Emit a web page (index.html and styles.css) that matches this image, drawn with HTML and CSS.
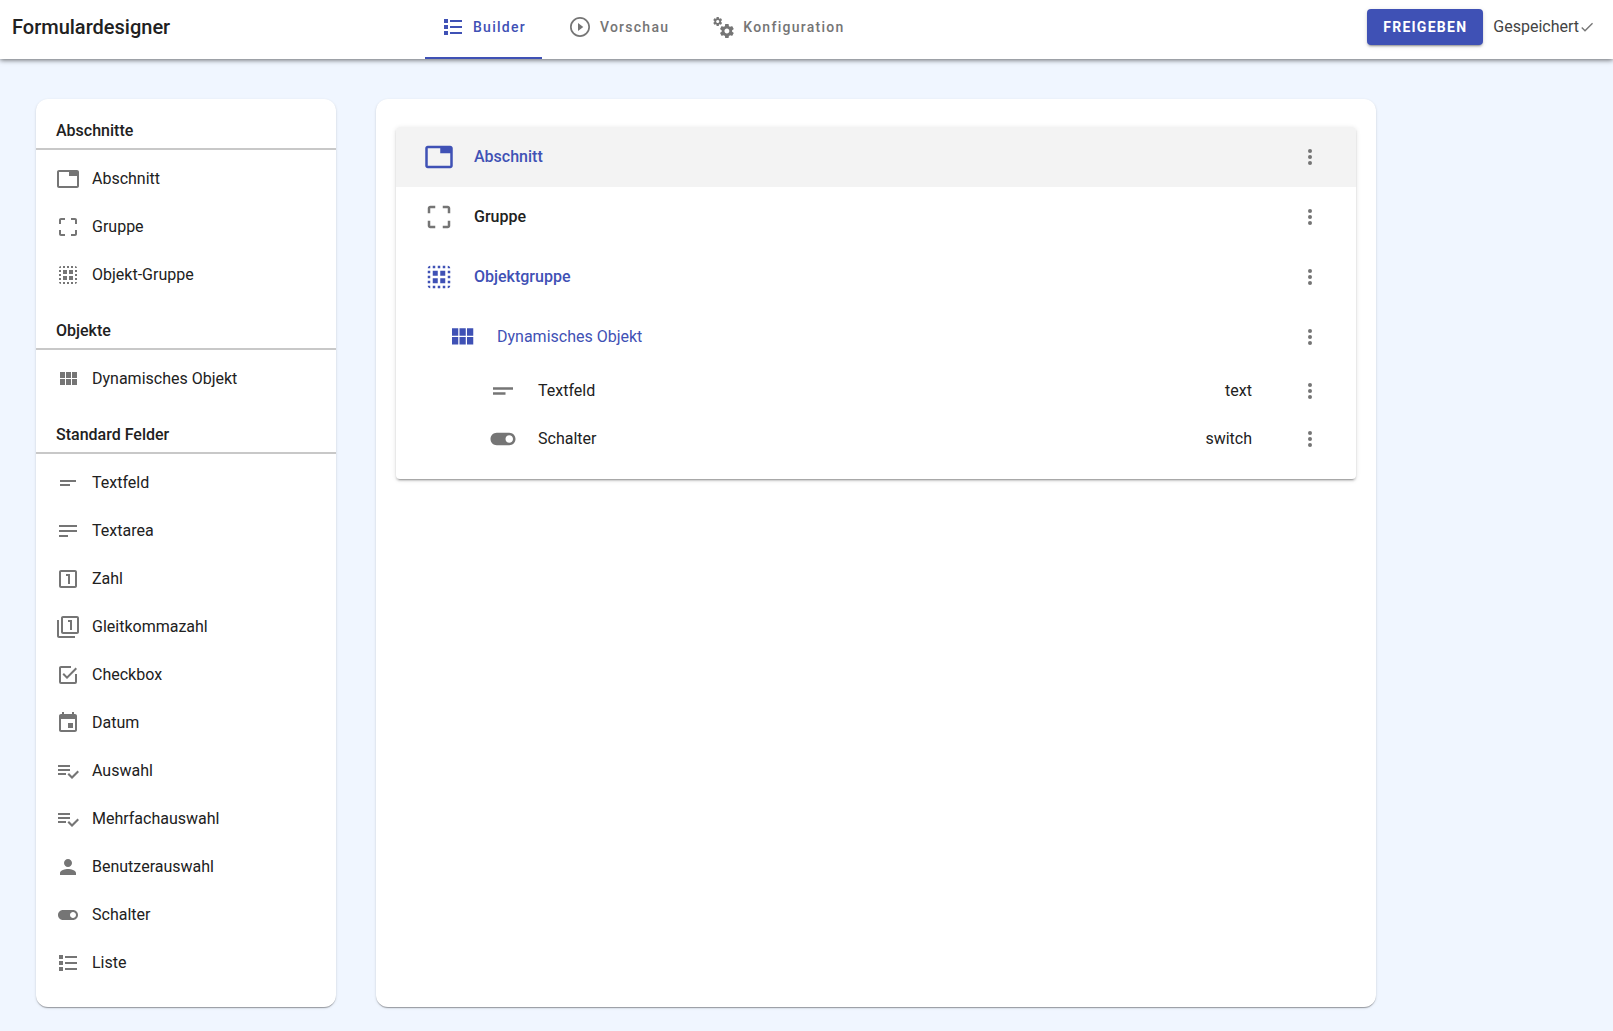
FILE: index.html
```html
<!DOCTYPE html>
<html lang="de">
<head>
<meta charset="utf-8">
<meta name="viewport" content="width=device-width, initial-scale=1">
<title>Formulardesigner</title>
<link rel="stylesheet" href="styles.css">
</head>
<body>
<svg class="sprite" aria-hidden="true">
  <symbol id="i-tab" viewBox="0 0 24 24"><path d="M21 3H3c-1.1 0-2 .9-2 2v14c0 1.1.9 2 2 2h18c1.1 0 2-.9 2-2V5c0-1.1-.9-2-2-2zm0 16H3V5h10v4h8v10z"/></symbol>
  <symbol id="i-group" viewBox="0 0 24 24"><path d="M3 5v4h2V5h4V3H5c-1.1 0-2 .9-2 2zm2 10H3v4c0 1.1.9 2 2 2h4v-2H5v-4zm14 4h-4v2h4c1.1 0 2-.9 2-2v-4h-2v4zm0-16h-4v2h4v4h2V5c0-1.1-.9-2-2-2z"/></symbol>
  <symbol id="i-objgroup" viewBox="0 0 24 24"><path d="M3 5h2V3c-1.1 0-2 .9-2 2zm0 8h2v-2H3v2zm4 8h2v-2H7v2zM3 9h2V7H3v2zm10-6h-2v2h2V3zm6 0v2h2c0-1.1-.9-2-2-2zM5 21v-2H3c0 1.1.9 2 2 2zm-2-4h2v-2H3v2zM9 3H7v2h2V3zm2 18h2v-2h-2v2zm8-8h2v-2h-2v2zm0 8c1.1 0 2-.9 2-2h-2v2zm0-12h2V7h-2v2zm0 8h2v-2h-2v2zm-4 4h2v-2h-2v2zm0-16h2V3h-2v2zM7 7h4v4H7zM13 7h4v4h-4zM7 13h4v4H7zM13 13h4v4h-4z"/></symbol>
  <symbol id="i-module" viewBox="0 0 24 24"><path d="M4 11h5V5H4v6zm0 7h5v-6H4v6zm6 0h5v-6h-5v6zm6 0h5v-6h-5v6zm-6-7h5V5h-5v6zm6-6v6h5V5h-5z"/></symbol>
  <symbol id="i-short" viewBox="0 0 24 24"><path d="M4 9h16v2H4V9zm0 4h10v2H4v-2z"/></symbol>
  <symbol id="i-notes" viewBox="0 0 24 24"><path d="M3 6h18v2H3zM3 11h18v2H3zM3 16h9v2H3z"/></symbol>
  <symbol id="i-one" viewBox="0 0 24 24"><path d="M19 3H5c-1.1 0-2 .9-2 2v14c0 1.1.9 2 2 2h14c1.1 0 2-.9 2-2V5c0-1.1-.9-2-2-2zm0 16H5V5h14v14zm-7-2h2V7h-4v2h2z"/></symbol>
  <symbol id="i-filter" viewBox="0 0 24 24"><path d="M3 5H1v16c0 1.1.9 2 2 2h16v-2H3V5zm11 10h2V5h-4v2h2v8zm7-14H7c-1.1 0-2 .9-2 2v14c0 1.1.9 2 2 2h14c1.1 0 2-.9 2-2V3c0-1.1-.9-2-2-2zm0 16H7V3h14v14z"/></symbol>
  <symbol id="i-checkbox" viewBox="0 0 24 24"><path d="M19 19H5V5h10V3H5c-1.11 0-2 .89-2 2v14a2 2 0 0 0 2 2h14a2 2 0 0 0 2-2v-8h-2M7.91 10.08L6.5 11.5 11 16 21 6l-1.41-1.42L11 13.17z"/></symbol>
  <symbol id="i-event" viewBox="0 0 24 24"><path d="M17 12h-5v5h5v-5zM16 1v2H8V1H6v2H5c-1.11 0-1.99.9-1.99 2L3 19c0 1.1.89 2 2 2h14c1.1 0 2-.9 2-2V5c0-1.1-.9-2-2-2h-1V1h-2zm3 18H5V8h14v11z"/></symbol>
  <symbol id="i-select" viewBox="0 0 24 24"><path d="M14 10H2v2h12v-2m0-4H2v2h12V6M2 16h8v-2H2v2m19.5-4.5L23 13l-6.99 7-4.51-4.5L13 14l3.01 3 5.49-5.5z"/></symbol>
  <symbol id="i-person" viewBox="0 0 24 24"><path d="M12 12c2.21 0 4-1.79 4-4s-1.79-4-4-4-4 1.79-4 4 1.79 4 4 4zm0 2c-2.67 0-8 1.34-8 4v2h16v-2c0-2.66-5.33-4-8-4z"/></symbol>
  <symbol id="i-toggle" viewBox="0 0 24 24"><path d="M17 7H7c-2.76 0-5 2.24-5 5s2.24 5 5 5h10c2.76 0 5-2.24 5-5s-2.24-5-5-5zm0 8c-1.66 0-3-1.34-3-3s1.34-3 3-3 3 1.34 3 3-1.34 3-3 3z"/></symbol>
  <symbol id="i-list" viewBox="0 0 24 24"><path d="M3 4h4v4H3zM9 5v2h12V5zM3 10h4v4H3zM9 11v2h12v-2zM3 16h4v4H3zM9 17v2h12v-2z"/></symbol>
  <symbol id="i-play" viewBox="0 0 24 24"><path d="M12 2C6.48 2 2 6.48 2 12s4.480 10 10 10 10-4.480 10-10S17.520 2 12 2zm0 18.300a8.300 8.300 0 1 1 0-16.600 8.300 8.300 0 0 1 0 16.600zM10 8v8l5.300-4z"/></symbol>
  <symbol id="i-cogs" viewBox="0 0 24 24"><path d="M15.9,18.45C17.25,18.45 18.35,17.35 18.35,16C18.35,14.65 17.25,13.55 15.9,13.55C14.54,13.55 13.45,14.65 13.45,16C13.45,17.35 14.54,18.45 15.9,18.45M21.1,16.68L22.58,17.84C22.71,17.95 22.75,18.13 22.66,18.29L21.26,20.71C21.17,20.86 21,20.92 20.83,20.86L19.09,20.16C18.73,20.44 18.33,20.67 17.91,20.85L17.64,22.7C17.62,22.87 17.47,23 17.3,23H14.5C14.32,23 14.18,22.87 14.15,22.7L13.89,20.85C13.46,20.67 13.07,20.44 12.71,20.16L10.96,20.86C10.81,20.92 10.62,20.86 10.54,20.71L9.14,18.29C9.05,18.13 9.09,17.95 9.22,17.84L10.7,16.68L10.65,16L10.7,15.31L9.22,14.16C9.09,14.05 9.05,13.86 9.14,13.71L10.54,11.29C10.62,11.13 10.81,11.07 10.96,11.13L12.71,11.84C13.07,11.56 13.46,11.32 13.89,11.15L14.15,9.29C14.18,9.13 14.32,9 14.5,9H17.3C17.47,9 17.62,9.13 17.64,9.29L17.91,11.15C18.33,11.32 18.73,11.56 19.09,11.84L20.83,11.13C21,11.07 21.17,11.13 21.26,11.29L22.66,13.71C22.75,13.86 22.71,14.05 22.58,14.16L21.1,15.31L21.15,16L21.1,16.68M6.69,8.07C7.56,8.07 8.26,7.37 8.26,6.5C8.26,5.63 7.56,4.92 6.69,4.92A1.58,1.58 0 0,0 5.11,6.5C5.11,7.37 5.82,8.07 6.69,8.07M10.03,6.94L11,7.68C11.07,7.75 11.09,7.87 11.03,7.97L10.13,9.53C10.08,9.63 9.96,9.67 9.86,9.63L8.74,9.18L8,9.62L7.81,10.81C7.79,10.92 7.7,11 7.59,11H5.79C5.67,11 5.58,10.92 5.56,10.81L5.4,9.62L4.64,9.18L3.5,9.63C3.41,9.67 3.3,9.63 3.24,9.53L2.34,7.97C2.28,7.87 2.31,7.75 2.39,7.68L3.34,6.94L3.31,6.5L3.34,6.06L2.39,5.32C2.31,5.25 2.28,5.13 2.34,5.03L3.24,3.47C3.3,3.37 3.41,3.33 3.5,3.37L4.63,3.82L5.4,3.38L5.56,2.19C5.58,2.08 5.67,2 5.79,2H7.59C7.7,2 7.79,2.08 7.81,2.19L8,3.38L8.74,3.82L9.86,3.37C9.96,3.33 10.08,3.37 10.13,3.47L11.03,5.03C11.09,5.13 11.07,5.25 11,5.32L10.03,6.06L10.06,6.5L10.03,6.94Z"/></symbol>
  <symbol id="i-check" viewBox="0 0 24 24"><path d="M9 16.17L4.83 12l-1.42 1.410L9 19 21 7l-1.410-1.410z"/></symbol>
  <symbol id="i-more" viewBox="0 0 24 24"><circle cx="12" cy="6" r="2"/><circle cx="12" cy="12" r="2"/><circle cx="12" cy="18" r="2"/></symbol>
</svg>

<header class="topbar">
  <h1 class="title">Formulardesigner</h1>
  <nav class="tabs">
    <a class="tab tab-active" href="#builder" aria-current="page"><svg class="icon"><use href="#i-list"/></svg>Builder</a>
    <a class="tab" href="#vorschau"><svg class="icon"><use href="#i-play"/></svg>Vorschau</a>
    <a class="tab" href="#konfiguration"><svg class="icon"><use href="#i-cogs"/></svg>Konfiguration</a>
  </nav>
  <div class="actions">
    <button class="release" type="button">FREIGEBEN</button>
    <span class="saved">Gespeichert<svg class="icon-small"><use href="#i-check"/></svg></span>
  </div>
</header>

<div class="workspace">
  <aside class="card palette">
    <h2 class="palette-title">Abschnitte</h2>
    <ul class="palette-list">
      <li class="palette-item"><svg class="icon"><use href="#i-tab"/></svg>Abschnitt</li>
      <li class="palette-item"><svg class="icon"><use href="#i-group"/></svg>Gruppe</li>
      <li class="palette-item"><svg class="icon"><use href="#i-objgroup"/></svg>Objekt-Gruppe</li>
    </ul>
    <h2 class="palette-title">Objekte</h2>
    <ul class="palette-list">
      <li class="palette-item"><svg class="icon"><use href="#i-module"/></svg>Dynamisches Objekt</li>
    </ul>
    <h2 class="palette-title">Standard Felder</h2>
    <ul class="palette-list">
      <li class="palette-item"><svg class="icon"><use href="#i-short"/></svg>Textfeld</li>
      <li class="palette-item"><svg class="icon"><use href="#i-notes"/></svg>Textarea</li>
      <li class="palette-item"><svg class="icon"><use href="#i-one"/></svg>Zahl</li>
      <li class="palette-item"><svg class="icon"><use href="#i-filter"/></svg>Gleitkommazahl</li>
      <li class="palette-item"><svg class="icon"><use href="#i-checkbox"/></svg>Checkbox</li>
      <li class="palette-item"><svg class="icon"><use href="#i-event"/></svg>Datum</li>
      <li class="palette-item"><svg class="icon"><use href="#i-select"/></svg>Auswahl</li>
      <li class="palette-item"><svg class="icon"><use href="#i-select"/></svg>Mehrfachauswahl</li>
      <li class="palette-item"><svg class="icon"><use href="#i-person"/></svg>Benutzerauswahl</li>
      <li class="palette-item"><svg class="icon"><use href="#i-toggle"/></svg>Schalter</li>
      <li class="palette-item"><svg class="icon"><use href="#i-list"/></svg>Liste</li>
    </ul>
  </aside>

  <main class="card canvas">
    <div class="tree">
      <div class="row row-head row-accent row-selected"><svg class="icon-large"><use href="#i-tab"/></svg><span class="name">Abschnitt</span><button class="more" type="button" aria-label="Menü"><svg class="icon"><use href="#i-more"/></svg></button></div>
      <div class="row row-head"><svg class="icon-large"><use href="#i-group"/></svg><span class="name">Gruppe</span><button class="more" type="button" aria-label="Menü"><svg class="icon"><use href="#i-more"/></svg></button></div>
      <div class="row row-head row-accent"><svg class="icon-large"><use href="#i-objgroup"/></svg><span class="name">Objektgruppe</span><button class="more" type="button" aria-label="Menü"><svg class="icon"><use href="#i-more"/></svg></button></div>
      <div class="row row-object row-accent"><svg class="icon-large"><use href="#i-module"/></svg><span class="name">Dynamisches Objekt</span><button class="more" type="button" aria-label="Menü"><svg class="icon"><use href="#i-more"/></svg></button></div>
      <div class="row row-field"><svg class="icon-large"><use href="#i-short"/></svg><span class="name">Textfeld</span><span class="type">text</span><button class="more" type="button" aria-label="Menü"><svg class="icon"><use href="#i-more"/></svg></button></div>
      <div class="row row-field"><svg class="icon-large"><use href="#i-toggle"/></svg><span class="name">Schalter</span><span class="type">switch</span><button class="more" type="button" aria-label="Menü"><svg class="icon"><use href="#i-more"/></svg></button></div>
    </div>
  </main>
</div>
</body>
</html>
```
FILE: styles.css
```css
:root {
  --primary: #3f51b5;
  --text: #212121;
  --muted: #757575;
  --elevation-1: 0 2px 1px -1px rgba(0, 0, 0, .2), 0 1px 1px 0 rgba(0, 0, 0, .14), 0 1px 3px 0 rgba(0, 0, 0, .12);
  --elevation-2: 0 3px 1px -2px rgba(0, 0, 0, .2), 0 2px 2px 0 rgba(0, 0, 0, .14), 0 1px 5px 0 rgba(0, 0, 0, .12);
}

* {
  box-sizing: border-box;
}

body {
  margin: 0;
  background: #f0f6ff;
  color: var(--text);
  font: 400 16px/24px Roboto, sans-serif;
}

.sprite {
  display: none;
}

.icon,
.icon-large,
.icon-small {
  flex: none;
  display: block;
  fill: currentColor;
  width: 24px;
  height: 24px;
}

.icon-large {
  width: 30px;
  height: 30px;
}

.icon-small {
  width: 16px;
  height: 16px;
}

.topbar {
  position: relative;
  display: flex;
  align-items: flex-start;
  padding: 9px 18px 0 12px;
  background: #fff;
  box-shadow: 0 1px 5px rgba(0, 0, 0, .6);
}

.title {
  flex: 0 1 413px;
  margin: 0;
  font-size: 20px;
  font-weight: 500;
  line-height: 36px;
}

.tabs {
  display: flex;
  gap: 10px;
}

.tab {
  display: flex;
  align-items: center;
  gap: 8px;
  height: 50px;
  padding: 0 16px 12px;
  border-bottom: 2px solid transparent;
  color: var(--muted);
  font-size: 14px;
  font-weight: 500;
  letter-spacing: .09em;
  text-decoration: none;
}

.tab-active {
  border-color: var(--primary);
  color: var(--primary);
}

.actions {
  display: flex;
  align-items: center;
  gap: 10px;
  margin-left: auto;
}

.release {
  height: 36px;
  padding: 0 16px;
  border: 0;
  border-radius: 4px;
  background: var(--primary);
  color: #fff;
  box-shadow: var(--elevation-2);
  font: 700 14px/36px Roboto, sans-serif;
  letter-spacing: .09em;
}

.saved {
  display: flex;
  align-items: center;
  color: #444;
}

.saved .icon-small {
  color: var(--muted);
}

.workspace {
  display: flex;
  gap: 40px;
  padding: 40px 36px 24px;
}

.card {
  border-radius: 12px;
  background: #fff;
  box-shadow: var(--elevation-1);
}

.palette {
  flex: none;
  width: 300px;
  padding-bottom: 20px;
}

.palette-title {
  margin: 0;
  padding: 20px 20px 5px;
  border-bottom: 2px solid #c8c8c8;
  font-size: 16px;
  font-weight: 500;
  line-height: 24px;
}

.palette-list {
  margin: 0;
  padding: 5px 20px 0;
  list-style: none;
}

.palette-item {
  display: flex;
  align-items: center;
  gap: 12px;
  height: 48px;
}

.palette-item .icon {
  color: var(--muted);
}

.canvas {
  flex: 0 1 1000px;
  padding: 28px 20px;
}

.tree {
  padding-bottom: 16px;
  border-radius: 4px;
  box-shadow: var(--elevation-2);
}

.row {
  display: flex;
  align-items: center;
  gap: 20px;
  height: 60px;
  padding: 0 34px 0 28px;
}

.row .icon-large {
  color: var(--muted);
}

.row-head {
  font-weight: 500;
}

.row-selected {
  border-radius: 4px 4px 0 0;
  background: #f3f3f3;
}

.row-accent,
.row-accent .icon-large {
  color: var(--primary);
}

.row-object {
  padding-left: 51px;
}

.row-field {
  height: 48px;
  padding-left: 92px;
}

.name {
  flex: 1;
}

.type {
  margin-right: 26px;
}

.more {
  padding: 0;
  border: 0;
  background: none;
  color: var(--muted);
}
```
